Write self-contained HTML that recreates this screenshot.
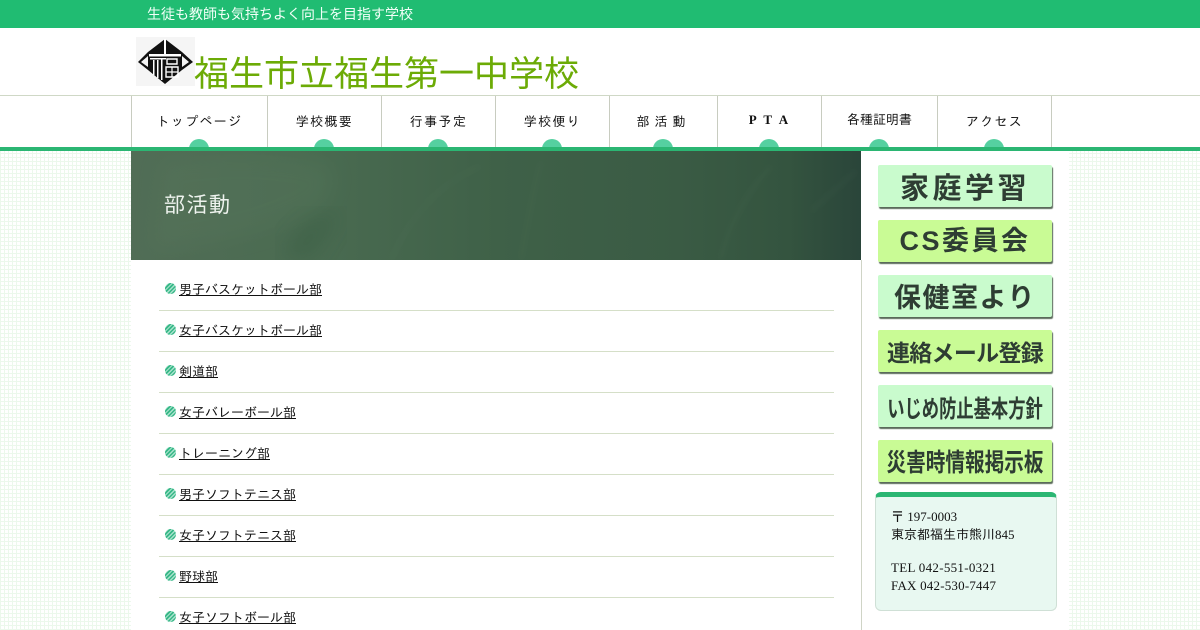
<!DOCTYPE html>
<html lang="ja">
<head>
<meta charset="utf-8">
<title>部活動</title>
<style>
html,body{margin:0;padding:0;width:1200px;height:630px;overflow:hidden}
body{position:relative;background-color:#fff;background-image:repeating-linear-gradient(0deg,#ecf8ec 0,#ecf8ec 1px,transparent 1px,transparent 4px),repeating-linear-gradient(90deg,#ecf8ec 0,#ecf8ec 1px,transparent 1px,transparent 4px);font-family:"Liberation Serif","IPAGothic",serif;color:#111}
.abs{position:absolute}
#top{left:0;top:0;width:1200px;height:28px;background:#20bc72}
#top span{position:absolute;left:147px;top:5px;font:14px/18px "Liberation Sans","WenQuanYi Zen Hei",sans-serif;color:#f2fff8;white-space:nowrap}
#head{left:0;top:28px;width:1200px;height:67px;background:#fff}
#title{left:194px;top:53px;font:35px/44px "Liberation Sans","WenQuanYi Zen Hei",sans-serif;color:#6cab06;white-space:nowrap}
#nav{left:0;top:95px;width:1200px;height:52px;background:#fff;border-top:1px solid #cfd8c6;box-sizing:border-box;overflow:hidden}
.n{position:absolute;top:0;height:52px;border-left:1px solid #c8ccc0;box-sizing:border-box;text-align:center;font:13px/52px "Liberation Serif","IPAGothic",serif;color:#111;letter-spacing:1.3px;white-space:nowrap}
.n:after{content:"";position:absolute;left:50%;margin-left:-11px;top:43px;width:20px;height:20px;border-radius:50%;background:#55d0a0}
#bar{left:0;top:147px;width:1200px;height:4px;background:#2bb673}
#wrap{left:131px;top:151px;width:938px;height:479px;background:#fff}
#hero{left:131px;top:151px;width:730px;height:109px;background:linear-gradient(90deg,#516d56 0%,#4a6b51 25%,#3f6148 50%,#3a5b44 75%,#34543f 90%,#2a453a 100%);overflow:hidden}
#hero span{position:absolute;left:33px;top:41px;font:21px/28px "Liberation Sans","WenQuanYi Zen Hei",sans-serif;letter-spacing:1.5px;color:#eef3ee;white-space:nowrap}
#side{left:861px;top:260px;width:1px;height:370px;background:#cfd4c6}
.li{position:absolute;left:159px;width:675px;height:40px;border-bottom:1px solid #d5dfc8;font:13px/18px "Liberation Sans","IPAGothic",sans-serif}
.li a{position:absolute;left:20px;top:11px;color:#111;text-decoration:underline;white-space:nowrap}
.li i{position:absolute;left:6px;top:13px;width:11px;height:11px;border-radius:50%;background:repeating-linear-gradient(135deg,#38b888 0,#38b888 1.6px,#a8e2cc 1.6px,#a8e2cc 3px)}
.b{position:absolute;left:878px;width:174px;height:42px;border-radius:2px;box-shadow:1px 2px 1px #5a6a5a;text-align:center;font-family:"Noto Sans CJK JP",sans-serif;font-weight:700;color:#2e3d33;white-space:nowrap;overflow:hidden}
.b span{display:inline-block}
.l{background:#c9fbcd}
.y{background:#c9fb95}
#addr{left:875px;top:492px;width:182px;height:119px;box-sizing:border-box;background:#e8f8f1;border:1px solid #cfe0d6;border-top:5px solid #2bb673;border-radius:6px;font:13px/18px "Liberation Serif","IPAGothic",serif;color:#111;padding:11px 0 0 15px}
#addr div{height:18px;white-space:nowrap}
</style>
</head>
<body>
<div class="abs" id="top"><span>生徒も教師も気持ちよく向上を目指す学校</span></div>
<div class="abs" id="head"></div>
<svg class="abs" style="left:136px;top:37px" width="59" height="49" viewBox="0 0 59 49">
<rect width="59" height="49" fill="#f5f5f5"/>
<path d="M29 2 46 15 57 25 46 33 29 47 12 33 2 25 12 15Z" fill="#111"/>
<path d="M12 19 5 25 12 30ZM46 19 53 25 46 30Z" fill="#f5f5f5"/>
<path d="M13 17H45V19.5H13Z" fill="#fff"/>
<path d="M28 2h2v15h-2z" fill="#fff"/>
<path d="M17 23h1.5v15H17zM21 23h1.5v18H21zM25 21h1.5v22H25zM14 21h16v1.5H14z" fill="#fff"/>
<path d="M31 22h10v5H31zM30 30h12v10H30z" fill="none" stroke="#fff" stroke-width="1.4"/>
<path d="M36 30v10M30 35h12" stroke="#fff" stroke-width="1.2"/>
</svg>
<div class="abs" id="title">福生市立福生第一中学校</div>
<div class="abs" id="nav">
<div class="n" style="left:131px;width:136px">トップページ</div>
<div class="n" style="left:267px;width:114px">学校概要</div>
<div class="n" style="left:381px;width:114px">行事予定</div>
<div class="n" style="left:495px;width:114px">学校便り</div>
<div class="n" style="left:609px;width:108px;letter-spacing:5px">部活動</div>
<div class="n" style="left:717px;width:104px;letter-spacing:2.2px;line-height:48px;font-weight:700">P T A</div>
<div class="n" style="left:821px;width:116px;letter-spacing:0;line-height:48px">各種証明書</div>
<div class="n" style="left:937px;width:115px;border-right:1px solid #c8ccc0">アクセス</div>
</div>
<div class="abs" id="wrap"></div>
<div class="abs" id="bar"></div>
<div class="abs" id="hero">
<svg width="730" height="109" style="position:absolute;left:0;top:0">
<defs><filter id="f"><feGaussianBlur stdDeviation="10"/></filter><filter id="g"><feGaussianBlur stdDeviation="3"/></filter></defs>
<path d="M30 10Q130-5 200 15 210 50 170 65 120 90 20 100Z" fill="#5f7e62" opacity=".2" filter="url(#f)"/>
<path d="M150 105Q170 70 190 65L210 60 180 109Z" fill="#365a41" opacity=".4" filter="url(#f)"/>
<path d="M260 109Q290 40 350 15M390 109Q400 50 410 10M590 109Q600 60 640 15M680 60L725 20" stroke="#6a8a70" stroke-width="4" fill="none" opacity=".08" filter="url(#g)"/>
</svg>
<span>部活動</span>
</div>
<div class="abs" id="side"></div>
<div class="li" style="top:270px"><i></i><a href="#">男子バスケットボール部</a></div>
<div class="li" style="top:311px"><i></i><a href="#">女子バスケットボール部</a></div>
<div class="li" style="top:352px"><i></i><a href="#">剣道部</a></div>
<div class="li" style="top:393px"><i></i><a href="#">女子バレーボール部</a></div>
<div class="li" style="top:434px"><i></i><a href="#">トレーニング部</a></div>
<div class="li" style="top:475px"><i></i><a href="#">男子ソフトテニス部</a></div>
<div class="li" style="top:516px"><i></i><a href="#">女子ソフトテニス部</a></div>
<div class="li" style="top:557px"><i></i><a href="#">野球部</a></div>
<div class="li" style="top:598px"><i></i><a href="#">女子ソフトボール部</a></div>
<div class="b l" style="top:165px;font-size:29px;line-height:43px;letter-spacing:3.5px">家庭学習</div>
<div class="b y" style="top:220px;font-size:27px;line-height:42px;letter-spacing:2.5px;font-family:'Liberation Sans','Noto Sans CJK JP',sans-serif">CS委員会</div>
<div class="b l" style="top:275px;font-size:27px;line-height:42px;letter-spacing:1.5px">保健室より</div>
<div class="b y" style="top:330px;font-size:23px;line-height:43px;letter-spacing:-.7px">連絡メール登録</div>
<div class="b l" style="top:385px;font-size:24px;line-height:43px"><span style="width:216px;margin:0 0 0 -21px;transform:scaleX(.72);transform-origin:50% 50%">いじめ防止基本方針</span></div>
<div class="b y" style="top:440px;font-size:25px;line-height:43px"><span style="width:200px;margin:0 0 0 -13px;transform:scaleX(.785);transform-origin:50% 50%">災害時情報掲示板</span></div>
<div class="abs" id="addr">
<div>〒 197-0003</div>
<div>東京都福生市熊川845</div>
<div style="height:15px"></div>
<div style="letter-spacing:.3px">TEL 042-551-0321</div>
<div style="letter-spacing:.2px">FAX 042-530-7447</div>
</div>
</body>
</html>
